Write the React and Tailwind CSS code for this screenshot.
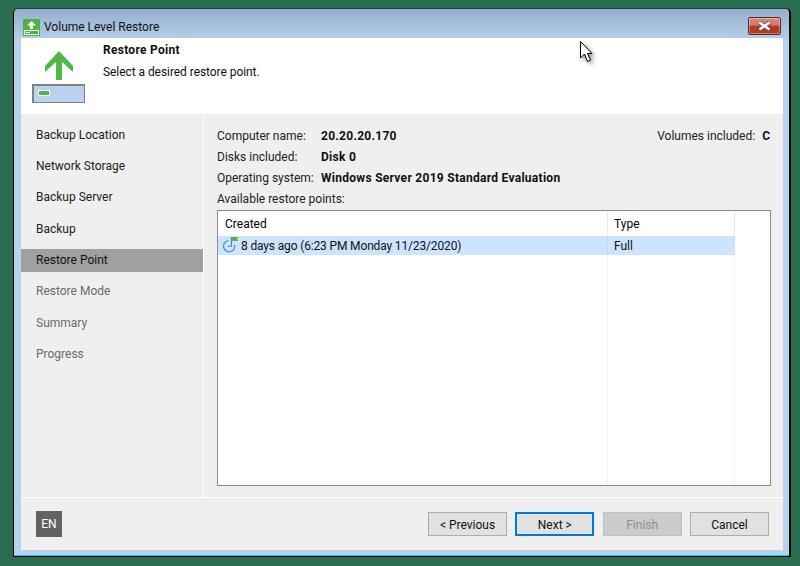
import React from 'react';

const font = { fontFamily: 'Roboto, "Noto Sans", sans-serif' };

const steps = [
  { label: 'Backup Location' },
  { label: 'Network Storage' },
  { label: 'Backup Server' },
  { label: 'Backup' },
  { label: 'Restore Point', active: true },
  { label: 'Restore Mode', muted: true },
  { label: 'Summary', muted: true },
  { label: 'Progress', muted: true },
];

const TitleIcon = () => (
  <svg width="17" height="17" viewBox="0 0 17 17" shapeRendering="crispEdges">
    <rect width="17" height="17" fill="#4fb04a" />
    <path d="M8.5 2 L13 6.5 L10 6.5 L10 10 L7 10 L7 6.5 L4 6.5 Z" fill="#fff" shapeRendering="auto" />
    <rect x="1" y="11" width="15" height="5" fill="#fff" />
    <rect x="2" y="12" width="13" height="3" fill="#4fb04a" />
    <rect x="3" y="13" width="4" height="1" fill="#fff" />
  </svg>
);

const RestoreIcon = () => (
  <svg width="54" height="52" viewBox="0 0 54 52" shapeRendering="crispEdges">
    <path d="M27 0 L41 15 L41 21 L30 11 L30 29 L24 29 L24 11 L13 21 L13 15 Z" fill="#4fb848" shapeRendering="auto" />
    <rect x="0.75" y="33.75" width="51.5" height="17.5" fill="#b9d3ee" stroke="#808080" strokeWidth="1.5" />
    <rect x="6" y="39" width="12" height="6" fill="#fff" />
    <rect x="7" y="40" width="10" height="4" fill="#4fb848" />
  </svg>
);

const ClockIcon = () => (
  <svg width="17" height="17" viewBox="0 0 17 17" fill="none">
    <path d="M5.5 3.6 A5.6 5.6 0 1 0 11.6 8" stroke="#4a97c9" strokeWidth="1.3" />
    <path d="M8.5 9.3 H4.5" stroke="#4a97c9" strokeWidth="1.2" />
    <path d="M8.5 0 V9.5" stroke="#3f8fb0" strokeWidth="1.2" />
    <path d="M9 0 H15.5 L14 2 L15.5 4 H9 Z" fill="#4fb848" />
  </svg>
);

const Cursor = () => (
  <svg className="absolute left-[580px] top-[41px] drop-shadow-[2px_2px_2px_rgba(0,0,0,0.45)]" width="16" height="25" viewBox="0 0 16 25">
    <path d="M0.5 0.5 V17 L4.5 13 L7.5 20.5 L10.5 19 L7.5 12.5 L12 12.5 Z" fill="#fff" stroke="#000" strokeWidth="1" />
  </svg>
);

const Button = ({ children, focused, disabled }) => (
  <div
    className={
      'w-[79px] h-6 pt-[1px] flex items-center justify-center text-xs box-border ' +
      (focused
        ? 'border-2 border-[#0078d7] bg-[#e1e1e1] text-[#111]'
        : disabled
          ? 'border border-[#bfbfbf] bg-[#cccccc] text-[#8f8f8f]'
          : 'border border-[#adadad] bg-[#e1e1e1] text-[#111]')
    }
  >
    {children}
  </div>
);

const Info = ({ label, value }) => (
  <div className="flex h-[21px] items-center">
    <span className="w-[104px] shrink-0 text-[#222]">{label}</span>
    <span className="font-bold text-[#111] tracking-[0.28px]">{value}</span>
  </div>
);

export default function App() {
  return (
    <div className="relative w-[800px] h-[566px] overflow-hidden bg-[#2a6e52] pt-2 pl-[13px]" style={font}>
      <div className="w-[778px] h-[549px] border-l border-t border-r-2 border-b border-black border-t-[#2b3a40] rounded-t-[5px] flex flex-col pl-[7px] pr-[6px] pb-[6px] bg-gradient-to-b from-[#95aecb] from-0% to-[#b8d1ec] to-[6%] shadow-[inset_0_-1px_0_#1fc6e8]">
        {/* title bar */}
        <div className="h-[29px] shrink-0 flex items-center pt-[7px] relative">
          <div className="ml-[2px]">
            <TitleIcon />
          </div>
          <span className="ml-[4px] text-xs text-[#111]">Volume Level Restore</span>
          <div className="absolute right-[2px] top-[8px] w-[33px] h-[18px] rounded-[2px] border border-[#5a2a28] bg-gradient-to-b from-[#dc8a80] from-0% via-[#d2766c] via-45% to-[#b23a28] to-50% flex items-center justify-center shadow-[inset_0_0_0_1px_rgba(255,255,255,0.35)]">
            <svg width="15" height="10" viewBox="0 0 15 10">
              <path d="M2.5 1.5 L12.5 8.5 M12.5 1.5 L2.5 8.5" stroke="#555" strokeWidth="4" />
              <path d="M2.5 1.5 L12.5 8.5 M12.5 1.5 L2.5 8.5" stroke="#fff" strokeWidth="2.6" />
            </svg>
          </div>
        </div>

        {/* header */}
        <div className="h-[76px] shrink-0 bg-white flex">
          <div className="w-[82px] shrink-0 pl-[11px] pt-[13px]">
            <RestoreIcon />
          </div>
          <div className="pt-1 text-xs text-[#111]">
            <div className="font-bold leading-[17px] tracking-[0.28px]">Restore Point</div>
            <div className="leading-[17px] mt-[5px] tracking-[-0.06px]">Select a desired restore point.</div>
          </div>
        </div>

        {/* body */}
        <div className="flex-1 flex min-h-0 bg-[#efefef] text-xs">
          <div className="w-[183px] shrink-0 pt-[9.4px] border-r border-white">
            {steps.map((s) => (
              <div
                key={s.label}
                className={
                  'h-[23px] mb-[8.3px] pl-[15px] flex items-center ' +
                  (s.active ? 'bg-[#a0a0a0] text-[#111]' : s.muted ? 'text-[#6a6a6a]' : 'text-[#222]')
                }
              >
                {s.label}
              </div>
            ))}
          </div>
          <div className="flex-1 min-w-0 pl-[13px] pr-3 pt-[11px] pb-[11px] flex flex-col">
            <div className="relative">
              <Info label="Computer name:" value="20.20.20.170" />
              <Info label="Disks included:" value="Disk 0" />
              <Info label="Operating system:" value="Windows Server 2019 Standard Evaluation" />
              <div className="absolute right-[1px] top-0 h-[21px] flex items-center">
                <span className="text-[#222]">Volumes included:</span>
                <span className="font-bold ml-[7px] text-[#111]">C</span>
              </div>
            </div>
            <div className="h-[22px] flex items-center text-[#222]">Available restore points:</div>
            <div className="flex-1 min-h-0 border border-[#8a8a99] bg-white flex">
              <div className="flex flex-col w-[517px] shrink-0 relative">
                <div className="h-[25px] flex items-center">
                  <span className="w-[390px] pl-[7px] border-r border-[#e3e9f0] h-full flex items-center">Created</span>
                  <span className="pl-[6px] border-r border-[#e3e9f0] h-full flex-1 flex items-center">Type</span>
                </div>
                <div className="h-[19px] bg-[#cce4ff] flex items-center text-[#111]">
                  <span className="w-[390px] pl-[5px] flex items-center border-r border-[#c3daf4] h-full">
                    <ClockIcon />
                    <span className="ml-[1px] tracking-[-0.15px]">8 days ago (6:23 PM Monday 11/23/2020)</span>
                  </span>
                  <span className="pl-[6px]">Full</span>
                </div>
                <div className="flex-1 flex">
                  <div className="w-[390px] border-r border-[#e8f0f8]" />
                  <div className="flex-1 border-r border-[#e8f0f8]" />
                </div>
              </div>
            </div>
          </div>
        </div>

        {/* footer */}
        <div className="h-[53px] shrink-0 bg-[#efefef] border-t border-white flex items-center pl-[15px] pr-[14px]">
          <div className="w-[26px] h-[26px] bg-[#636363] text-white text-xs flex items-center justify-center">EN</div>
          <div className="ml-auto flex gap-[8.33px]">
            <Button>&lt; Previous</Button>
            <Button focused>Next &gt;</Button>
            <Button disabled>Finish</Button>
            <Button>Cancel</Button>
          </div>
        </div>
      </div>
      <Cursor />
    </div>
  );
}
